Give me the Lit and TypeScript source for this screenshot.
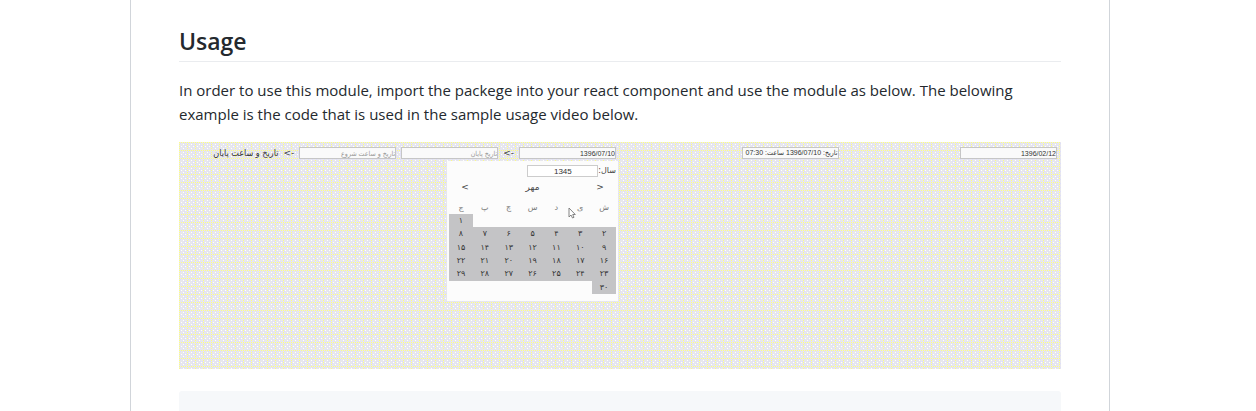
import { LitElement, html, css } from "lit";
import { customElement } from "lit/decorators.js";

const persian = (n: number) => String(n).replace(/\d/g, (d) => "۰۱۲۳۴۵۶۷۸۹"[Number(d)]);

@customElement("month-calendar")
class MonthCalendar extends LitElement {
  static styles = css`
    :host { display: block; box-sizing: border-box; width: 171px; padding: 4px 2px 7px; background: #fcfcfc; color: #444; }
    .year { display: flex; align-items: center; height: 12px; font-size: 8px; line-height: 12px; }
    .year input { box-sizing: border-box; width: 71px; height: 12px; padding: 0; border: 1px solid #ccc; background: #fff; color: #333; font: 8px "Liberation Sans", sans-serif; text-align: center; }
    .nav { display: grid; grid-template-columns: 32px 1fr 32px; align-items: center; height: 20px; font-size: 9px; text-align: center; }
    button { padding: 0; border: 0; background: none; color: inherit; font: inherit; }
    table { width: 100%; height: 97px; border-collapse: collapse; table-layout: fixed; font-size: 8px; line-height: 13px; text-align: center; }
    th { height: 17px; padding: 0; color: #777; font-weight: 400; font-size: 8px; vertical-align: bottom; }
    td { height: 13px; padding: 0; }
    .day { background: #c4c4c6; color: #333; }
    .day button { display: block; width: 100%; height: 13px; }
  `;

  private weeks(): (number | null)[][] {
    const cells: (number | null)[] = [...Array(6).fill(null), ...Array.from({ length: 30 }, (_, i) => i + 1)];
    while (cells.length % 7) cells.push(null);
    return Array.from({ length: cells.length / 7 }, (_, w) => cells.slice(w * 7, w * 7 + 7));
  }

  render() {
    return html`
      <div class="year"><label for="year">سال:</label><input id="year" .value=${"1345"} /></div>
      <div class="nav">
        <button aria-label="ماه قبل">&lt;</button><span>مهر</span><button aria-label="ماه بعد">&gt;</button>
      </div>
      <table>
        <thead><tr>${["ش", "ی", "د", "س", "چ", "پ", "ج"].map((d) => html`<th>${d}</th>`)}</tr></thead>
        <tbody>
          ${this.weeks().map((week) => html`<tr>${week.map((day) =>
            day ? html`<td class="day"><button>${persian(day)}</button></td>` : html`<td></td>`)}</tr>`)}
        </tbody>
      </table>
    `;
  }
}

@customElement("app-root")
class AppRoot extends LitElement {
  static styles = css`
    :host { display: block; box-sizing: border-box; height: 100vh; overflow: hidden; padding-right: 16px; background: #fff; color: #24292e; font: 15px/24px "Open Sans", sans-serif; }
    .page { box-sizing: border-box; max-width: 980px; margin: 0 auto; padding: 24px 48px 0; border: solid #d1d5da; border-width: 0 1px; }
    h2 { margin: 0 0 16px; padding-bottom: 3px; border-bottom: 1px solid #eaecef; font-size: 23px; line-height: 34px; font-weight: 600; }
    p { margin: 0 0 16px; }
    .demo {
      display: grid; grid-template-columns: 1fr 1fr 2fr; align-items: start; box-sizing: border-box; min-height: 227px; padding: 5px 4px;
      background: #e7e7ed url("data:image/svg+xml,%3Csvg xmlns='http://www.w3.org/2000/svg' width='8' height='8' shape-rendering='crispEdges'%3E%3Cpath fill='%23dedefa' d='M1 1h1v1h-1zM5 1h1v1h-1zM5 3h1v1h-1zM1 5h1v1h-1zM5 5h1v1h-1zM3 7h1v1h-1zM7 3h1v1h-1z'/%3E%3Cpath fill='%23ffff80' d='M0 0h1v1h-1zM2 0h1v1h-1zM4 0h1v1h-1zM6 0h1v1h-1zM0 2h1v1h-1zM0 4h1v1h-1zM0 6h1v1h-1z'/%3E%3Cpath fill='%23ffffff' d='M4 2h1v1h-1zM2 4h1v1h-1zM6 4h1v1h-1zM4 6h1v1h-1z'/%3E%3C/svg%3E");
      color: #444; font: 9px/12px "DejaVu Sans", sans-serif;
    }
    .demo > div { display: flex; align-items: center; gap: 5px; height: 12px; }
    .demo > .range { position: relative; padding-inline-start: 4px; }
    .title { font-family: "DejaVu Sans Condensed", "DejaVu Sans", sans-serif; color: #333; }
    .field { box-sizing: border-box; width: 97px; height: 12px; padding: 0; border: 1px solid #c6c6c6; background: #fafafa; color: #333; font: 7px "Liberation Sans", "DejaVu Sans Condensed", "DejaVu Sans", sans-serif; }
    .field::placeholder { color: #999; opacity: 1; }
    month-calendar { position: absolute; top: 14px; right: 2px; }
    .cursor { position: absolute; top: 60px; right: 44px; width: 8px; height: 12px; }
    .code { height: 120px; margin-top: 22px; border-radius: 3px; background: #f6f8fa; }
  `;

  render() {
    return html`
      <main class="page">
        <h2>Usage</h2>
        <p>In order to use this module, import the packege into your react component and use the module as below. The belowing example is the code that is used in the sample usage video below.</p>
        <section class="demo" dir="rtl" lang="fa">
          <div><input class="field" aria-label="تاریخ" .value=${"1396/02/12"} /></div>
          <div><input class="field" aria-label="تاریخ و ساعت" .value=${"تاریخ: 1396/07/10 ساعت: 07:30"} /></div>
          <div class="range">
            <input class="field" aria-label="تاریخ شروع" .value=${"1396/07/10"} />
            <span>-&gt;</span>
            <input class="field" aria-label="تاریخ پایان" placeholder="تاریخ پایان" />
            <input class="field" aria-label="تاریخ و ساعت شروع" placeholder="تاریخ و ساعت شروع" />
            <span>-&gt;</span>
            <span class="title">تاریخ و ساعت پایان</span>
            <month-calendar></month-calendar>
            <svg class="cursor" viewBox="0 0 8 12" aria-hidden="true"><path d="M1 1v9l2-2 1.5 3 1.5-.7L4.700 7.500H7.300z" fill="#fff" stroke="#777" stroke-width=".9" /></svg>
          </div>
        </section>
        <div class="code"></div>
      </main>
    `;
  }
}
